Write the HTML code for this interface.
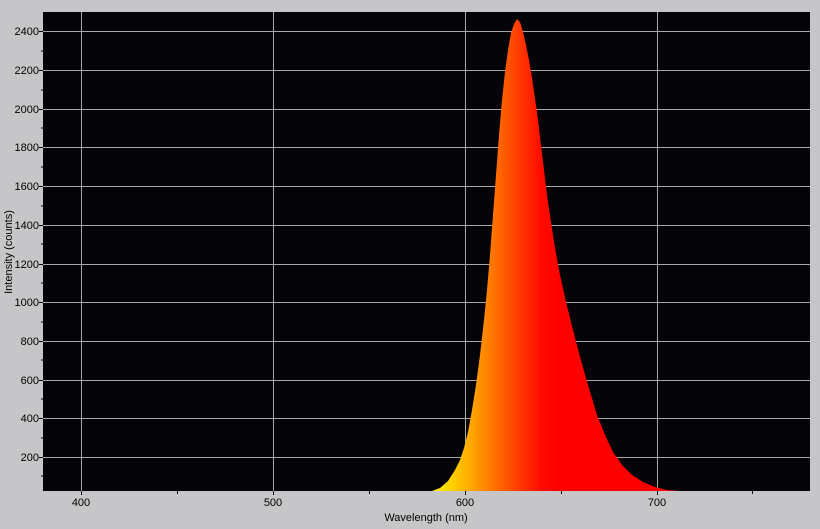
<!DOCTYPE html>
<html><head><meta charset="utf-8"><style>
html,body{margin:0;padding:0;background:#c6c5c8;}
svg{display:block;}
text{font-family:"Liberation Sans",sans-serif;font-size:11px;fill:#000;}
</style></head><body>
<svg width="820" height="529" xmlns="http://www.w3.org/2000/svg">
<defs>
<linearGradient id="g" gradientUnits="userSpaceOnUse" x1="435" y1="0" x2="560" y2="0">
<stop offset="0" stop-color="#ffee00"/>
<stop offset="0.2" stop-color="#ffc000"/>
<stop offset="0.5" stop-color="#ff6a00"/>
<stop offset="0.85" stop-color="#ff0a00"/>
<stop offset="1" stop-color="#ff0000"/>
</linearGradient>
</defs>
<rect x="43" y="12" width="767" height="479" fill="#050408"/>
<g stroke="#a8a8a8" stroke-width="1">
<line x1="81.5" y1="12" x2="81.5" y2="491"/>
<line x1="273.5" y1="12" x2="273.5" y2="491"/>
<line x1="465.5" y1="12" x2="465.5" y2="491"/>
<line x1="657.5" y1="12" x2="657.5" y2="491"/>
<line x1="43" y1="31.5" x2="810" y2="31.5"/>
<line x1="43" y1="70.5" x2="810" y2="70.5"/>
<line x1="43" y1="109.5" x2="810" y2="109.5"/>
<line x1="43" y1="147.5" x2="810" y2="147.5"/>
<line x1="43" y1="186.5" x2="810" y2="186.5"/>
<line x1="43" y1="225.5" x2="810" y2="225.5"/>
<line x1="43" y1="264.5" x2="810" y2="264.5"/>
<line x1="43" y1="302.5" x2="810" y2="302.5"/>
<line x1="43" y1="341.5" x2="810" y2="341.5"/>
<line x1="43" y1="380.5" x2="810" y2="380.5"/>
<line x1="43" y1="418.5" x2="810" y2="418.5"/>
<line x1="43" y1="457.5" x2="810" y2="457.5"/>
</g>
<polygon fill="url(#g)" points="432,491 440,488 448,481 455,470 460,460 464,448 468,432 472,410 476,385 480,355 484,320 487,290 490,255 493,215 496,175 499,135 502,100 505,72 508,50 511,33 514,24 517,19 520,22 523,32 526,45 529,60 532,78 535,98 538,120 541,145 544,170 547,195 551,222 555,248 560,275 566,302 573,330 580,357 588,385 597,415 605,435 613,452 622,465 632,475 643,482 655,487 667,490 680,491"/>
<g stroke="#000" stroke-width="1">
<line x1="39" y1="31.5" x2="43" y2="31.5"/><line x1="39" y1="70.5" x2="43" y2="70.5"/><line x1="39" y1="109.5" x2="43" y2="109.5"/><line x1="39" y1="147.5" x2="43" y2="147.5"/><line x1="39" y1="186.5" x2="43" y2="186.5"/><line x1="39" y1="225.5" x2="43" y2="225.5"/><line x1="39" y1="264.5" x2="43" y2="264.5"/><line x1="39" y1="302.5" x2="43" y2="302.5"/><line x1="39" y1="341.5" x2="43" y2="341.5"/><line x1="39" y1="380.5" x2="43" y2="380.5"/><line x1="39" y1="418.5" x2="43" y2="418.5"/><line x1="39" y1="457.5" x2="43" y2="457.5"/>
<line x1="41" y1="51" x2="43" y2="51"/><line x1="41" y1="90" x2="43" y2="90"/><line x1="41" y1="128" x2="43" y2="128"/><line x1="41" y1="167" x2="43" y2="167"/><line x1="41" y1="206" x2="43" y2="206"/><line x1="41" y1="244" x2="43" y2="244"/><line x1="41" y1="283" x2="43" y2="283"/><line x1="41" y1="322" x2="43" y2="322"/><line x1="41" y1="360" x2="43" y2="360"/><line x1="41" y1="399" x2="43" y2="399"/><line x1="41" y1="438" x2="43" y2="438"/><line x1="41" y1="476" x2="43" y2="476"/>
<line x1="81.5" y1="491" x2="81.5" y2="495"/><line x1="273.5" y1="491" x2="273.5" y2="495"/><line x1="465.5" y1="491" x2="465.5" y2="495"/><line x1="657.5" y1="491" x2="657.5" y2="495"/>
<line x1="177.5" y1="491" x2="177.5" y2="494"/><line x1="369.5" y1="491" x2="369.5" y2="494"/><line x1="561.5" y1="491" x2="561.5" y2="494"/><line x1="752.5" y1="491" x2="752.5" y2="494"/>
</g>
<g text-anchor="end">
<text x="39" y="35">2400</text><text x="39" y="74">2200</text><text x="39" y="113">2000</text><text x="39" y="151">1800</text><text x="39" y="190">1600</text><text x="39" y="229">1400</text><text x="39" y="268">1200</text><text x="39" y="306">1000</text><text x="39" y="345">800</text><text x="39" y="384">600</text><text x="39" y="422">400</text><text x="39" y="461">200</text>
</g>
<g text-anchor="middle">
<text x="81" y="506">400</text><text x="273" y="506">500</text><text x="465" y="506">600</text><text x="657" y="506">700</text>
<text x="426" y="521">Wavelength (nm)</text>
<text transform="translate(12,252) rotate(-90)">Intensity (counts)</text>
</g>
</svg>
</body></html>
